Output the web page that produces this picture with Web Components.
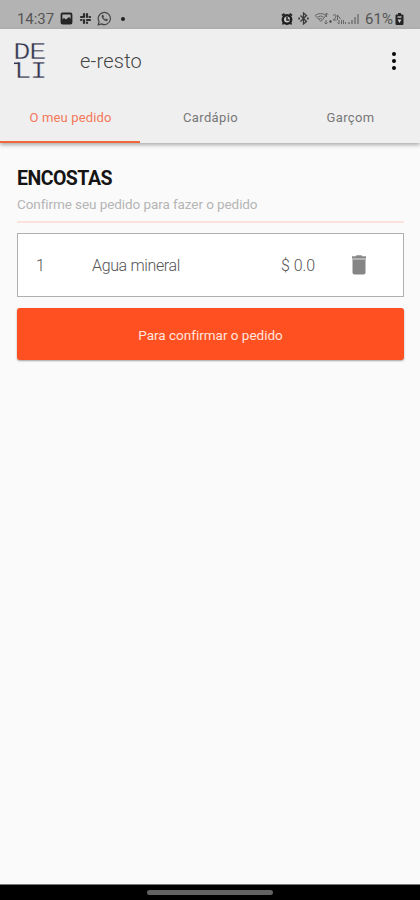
<!DOCTYPE html>
<html lang="pt">
<head>
<meta charset="utf-8">
<title>e-resto</title>
<style>
  html, body {
    height: 100%;
    margin: 0;
  }

  body {
    overflow: hidden;
    font-family: Roboto, "Liberation Sans", sans-serif;
  }
</style>
</head>
<body>
<order-app></order-app>

<script>
class BaseElement extends HTMLElement {
  constructor() {
    super();

    const template = document.createElement('template');

    template.innerHTML = `${this.getStyles()}\n${this.getContent()}`;
    this.attachShadow({mode: 'open'}).appendChild(template.content.cloneNode(true));
  }
}

// A single line of text, tracked to fill the given width
class TextLine extends BaseElement {
  connectedCallback() {
    this.fit();
  }

  fit() {
    const width = Number(this.getAttribute('width'));
    const line = this.shadowRoot.querySelector('span');
    const count = this.textContent.length;

    if (!width || !count) return;

    const spacing = (width - line.getBoundingClientRect().width) / count;

    line.style.letterSpacing = `${spacing.toFixed(3)}px`;
  }

  getStyles() {
    return `
      <style>
        :host {
          display: block;
          white-space: nowrap;
        }

        span {
          display: inline-block;
        }
      </style>
    `;
  }

  getContent() {
    return `<span><slot></slot></span>`;
  }
}

class StatusBar extends BaseElement {
  getStyles() {
    return `
      <style>
        :host {
          display: flex;
          justify-content: space-between;
          align-items: center;
          box-sizing: border-box;
          height: 29px;
          padding: 8px 16px 0 17px;
          background: #b3b3b3;
          color: #555;
          font-size: 15px;
          line-height: 20px;
        }

        div {
          display: flex;
          align-items: center;
        }

        svg {
          display: block;
        }

        .left svg:nth-of-type(1) { margin-left: 6px; }
        .left svg:nth-of-type(2) { margin-left: 6px; }
        .left svg:nth-of-type(3) { margin-left: 5px; }

        .dot {
          width: 4px;
          height: 4px;
          margin-left: 9px;
          border-radius: 50%;
          background: #222;
        }

        .right svg:nth-of-type(2) { margin-left: 5px; }
        .right svg:nth-of-type(3) { margin: 0 6px 0 6px; }
        .right svg:nth-of-type(4) { margin-left: 2px; }
      </style>
    `;
  }

  getContent() {
    return `
      <div class="left">
        <text-line width="37">14:37</text-line>
        <svg width="13" height="13" viewBox="0 0 13 13">
          <rect x="1.500" y="1.500" width="10" height="10" rx="1" fill="none" stroke="#252525" stroke-width="1.800"/>
          <path d="M1.500 8l2.500-2 2 1.500L9 5l2.500 2.500v4h-10z" fill="#252525"/>
        </svg>
        <svg width="13" height="13" viewBox="0 0 13 13" fill="none" stroke="#2c2c2c" stroke-width="2.200" stroke-linecap="round">
          <path d="M5 2v3M2 5h3M8 2v3M10.500 5h.5M2 8h.5M5 8v3M8 8h3M8 10.500v.5"/>
        </svg>
        <svg width="15" height="15" viewBox="0 0 15 15" fill="none" stroke="#444">
          <path d="M1.200 13.800l.9-3.100a6.100 6.100 0 1 1 2.300 2.200z" stroke-width="1.200"/>
          <path d="M5 4.200c-.8 2.800 2.600 6.300 5.300 5.600l.4-1.300-1.700-.8-.8.7c-1-.4-1.500-1-1.900-1.900l.6-.8-.7-1.600z" fill="#444" stroke-width=".3"/>
        </svg>
        <span class="dot"></span>
      </div>
      <div class="right">
        <svg width="12" height="12" viewBox="0 0 12 12">
          <path d="M1 2.500l2.500-1.800M11 2.500L8.500.7" stroke="#222" stroke-width="1.800"/>
          <circle cx="6" cy="6.500" r="4.200" fill="#c5c5c5" stroke="#202020" stroke-width="2.400"/>
          <path d="M6 4v3h2.500M2.500 10l-1 1.500M9.500 10l1 1.500" fill="none" stroke="#202020" stroke-width="1.500"/>
        </svg>
        <svg width="11" height="13" viewBox="0 0 11 13" fill="none" stroke="#3a3a3a" stroke-width="1.300">
          <path d="M2.500 3.500l6 6-3 2.500V1l3 2.500-6 6"/>
          <path d="M.3 6.500h1.700M9 6.500h1.700" stroke-width="2"/>
        </svg>
        <svg width="44" height="13" viewBox="0 0 44 13" fill="none" stroke="#666" stroke-width="1">
          <path d="M0 3.500Q5.500-.5 11 3.500L6 9.500zM2.500 5q3.300-2 6 0M4 7q1.500-1 3 0"/>
          <path d="M11.500 1v4M10 2.500L11.500 1 13 2.500M11 8v4M9.500 10.500L11 12l1.500-1.500"/>
          <circle cx="15.500" cy="9.500" r="1" fill="#444"/>
          <path d="M18 3.500q3-2 3 .5T18 8h3.500M22.500 3v5M22.500 3l3 4M24 8v4M22.500 10.500L24 12M26.500 12V8M28.500 12V8M30.500 12V10"/>
          <path d="M34 12v-2M37 12V8M40 12V5M43 12V2" stroke-width="1.600" stroke="#777"/>
        </svg>
        <text-line width="28">61%</text-line>
        <svg width="9" height="12" viewBox="0 0 9 12">
          <path d="M3 0h3v1.500h1.500q1 0 1 1V11q0 1-1 1h-6q-1 0-1-1V2.500q0-1 1-1H3z" fill="#242424"/>
          <path d="M2.500 3h4v2h-4z" fill="#929292"/>
          <path d="M2.500 6.500h4L4.500 10z" fill="#ccc"/>
        </svg>
      </div>
    `;
  }
}

class AppHeader extends BaseElement {
  connectedCallback() {
    const line = this.shadowRoot.querySelector('text-line');

    line.textContent = this.textContent;
    line.fit();
  }

  getStyles() {
    return `
      <style>
        :host {
          display: flex;
          align-items: center;
          box-sizing: border-box;
          height: 63px;
          padding: 0 24px 0 14px;
          color: #444;
          font-size: 20px;
          font-weight: 300;
        }

        .logo {
          width: 33px;
          height: 36px;
          overflow: visible;
          font-family: "Liberation Mono", monospace;
          font-weight: 400;
        }

        text-line {
          flex: 1;
          margin: 1px 0 0 33px;
        }

        .menu {
          display: grid;
          gap: 3px;
        }

        .menu i {
          width: 4px;
          height: 4px;
          border-radius: 50%;
          background: #050505;
        }
      </style>
    `;
  }

  getContent() {
    return `
      <svg class="logo" viewBox="0 0 33 36" fill="#34344e">
        <text transform="scale(1.250 1)" font-size="23" stroke="#efefef" stroke-width=".4"
          x="-.7 12.300 .3 12.800" y="15.500 15.500 35 35">DELI</text>
        <path d="M0 20.300h5" stroke="#34344e" stroke-width="1.500"/>
      </svg>
      <text-line width="62"></text-line>
      <div class="menu"><i></i><i></i><i></i></div>
    `;
  }
}

class TabItem extends BaseElement {
  getStyles() {
    return `
      <style>
        :host {
          display: flex;
          flex: 1;
          justify-content: center;
          align-items: center;
          box-sizing: border-box;
          padding: 1px 0 0 1px;
          border-bottom: 2px solid transparent;
          color: #777;
          font-size: 13px;
        }

        :host([active]) {
          border-color: #f2673a;
          color: #f47859;
        }
      </style>
    `;
  }

  getContent() {
    return `<slot></slot>`;
  }
}

class TabBar extends BaseElement {
  getStyles() {
    return `
      <style>
        :host {
          display: flex;
          height: 51px;
        }
      </style>
    `;
  }

  getContent() {
    return `<slot></slot>`;
  }
}

class SectionTitle extends BaseElement {
  getStyles() {
    return `
      <style>
        :host {
          display: block;
          height: 54px;
          border-bottom: 2px solid #fbe3dc;
        }

        .title {
          color: #151515;
          font-size: 19.500px;
          font-weight: 700;
          line-height: 24px;
        }

        .hint {
          margin-top: 3px;
          color: #b5b5b5;
          font-size: 13.500px;
          line-height: 20px;
        }
      </style>
    `;
  }

  getContent() {
    return `
      <div class="title"><slot name="title"></slot></div>
      <div class="hint"><slot></slot></div>
    `;
  }
}

class OrderItem extends BaseElement {
  getStyles() {
    return `
      <style>
        :host {
          display: grid;
          grid-template-columns: 56px 189px 70px 1fr;
          align-items: center;
          box-sizing: border-box;
          height: 64px;
          margin-top: 10px;
          padding-left: 18px;
          border: 1px solid #b0b0b0;
          background: #fff;
          color: #555;
          font-size: 16px;
          font-weight: 300;
        }

        svg {
          display: block;
        }
      </style>
    `;
  }

  getContent() {
    return `
      <slot name="count"></slot>
      <slot></slot>
      <slot name="price"></slot>
      <svg width="16" height="20" viewBox="0 0 16 20">
        <path d="M1 1h14v3.500H1z" fill="#b5b5b5"/>
        <path d="M1 1.700h3.500L5.500.3h5l1 1.400H15v1.200H1z" fill="#888"/>
        <path d="M1.500 4.500h13v13q0 2-2 2h-9q-2 0-2-2z" fill="#858585"/>
      </svg>
    `;
  }
}

class ConfirmButton extends BaseElement {
  getStyles() {
    return `
      <style>
        :host {
          display: flex;
          justify-content: center;
          align-items: center;
          box-sizing: border-box;
          height: 52px;
          margin-top: 11px;
          padding-top: 2px;
          border-radius: 3px;
          background: #ff5022;
          box-shadow: 0 1px 2px rgba(0, 0, 0, .35);
          color: #ffe5dc;
          font-size: 13.500px;
        }
      </style>
    `;
  }

  getContent() {
    return `<slot></slot>`;
  }
}

class NavigationHandle extends BaseElement {
  getStyles() {
    return `
      <style>
        :host {
          display: flex;
          justify-content: center;
          box-sizing: border-box;
          height: 16px;
          padding-top: 5px;
          border-top: 1px solid #777;
          background: #000;
        }

        i {
          width: 126px;
          height: 5px;
          border-radius: 3px;
          background: #626262;
        }
      </style>
    `;
  }

  getContent() {
    return `<i></i>`;
  }
}

class OrderApp extends BaseElement {
  getStyles() {
    return `
      <style>
        :host {
          display: flex;
          flex-direction: column;
          height: 100vh;
          background: #fafafa;
        }

        header {
          background: #efefef;
          box-shadow: 0 2px 4px rgba(0, 0, 0, .32);
        }

        main {
          flex: 1;
          padding: 24px 16px 0 17px;
        }
      </style>
    `;
  }

  getContent() {
    return `
      <status-bar></status-bar>
      <header>
        <app-header>e-resto</app-header>
        <tab-bar>
          <tab-item active><text-line width="82">O meu pedido</text-line></tab-item>
          <tab-item><text-line width="55">Cardápio</text-line></tab-item>
          <tab-item><text-line width="48">Garçom</text-line></tab-item>
        </tab-bar>
      </header>
      <main>
        <section-title>
          <text-line slot="title" width="95">ENCOSTAS</text-line>
          <text-line width="240">Confirme seu pedido para fazer o pedido</text-line>
        </section-title>
        <order-item>
          <text-line slot="count" width="7">1</text-line>
          <text-line width="88">Agua mineral</text-line>
          <text-line slot="price" width="34">$ 0.0</text-line>
        </order-item>
        <confirm-button>
          <text-line width="144">Para confirmar o pedido</text-line>
        </confirm-button>
      </main>
      <navigation-handle></navigation-handle>
    `;
  }
}

customElements.define('text-line', TextLine);
customElements.define('status-bar', StatusBar);
customElements.define('app-header', AppHeader);
customElements.define('tab-item', TabItem);
customElements.define('tab-bar', TabBar);
customElements.define('section-title', SectionTitle);
customElements.define('order-item', OrderItem);
customElements.define('confirm-button', ConfirmButton);
customElements.define('navigation-handle', NavigationHandle);
customElements.define('order-app', OrderApp);
</script>
</body>
</html>
